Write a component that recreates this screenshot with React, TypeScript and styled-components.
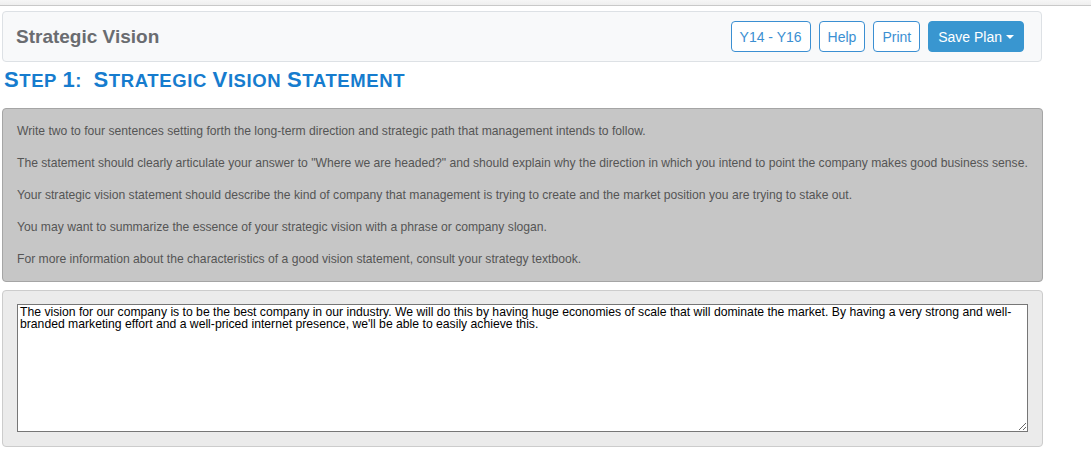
import styled, { createGlobalStyle } from 'styled-components';

const GlobalStyle = createGlobalStyle`
	body {
		margin: 0;
		background: #ffffff;
		font-family: 'Liberation Sans', Arial, sans-serif;
	}
`;

const ranges = ['Y14 - Y16', 'Help', 'Print'];

const guidance = [
	'Write two to four sentences setting forth the long-term direction and strategic path that management intends to follow.',
	'The statement should clearly articulate your answer to "Where we are headed?" and should explain why the direction in which you intend to point the company makes good business sense.',
	'Your strategic vision statement should describe the kind of company that management is trying to create and the market position you are trying to stake out.',
	'You may want to summarize the essence of your strategic vision with a phrase or company slogan.',
	'For more information about the characteristics of a good vision statement, consult your strategy textbook.',
];

const statement =
	"The vision for our company is to be the best company in our industry. We will do this by having huge economies of scale that will dominate the market. By having a very strong and well-branded marketing effort and a well-priced internet presence, we'll be able to easily achieve this.";

// small caps drawn by hand: first letter of each word full size, rest smaller
const SmallCaps = ({ text }: { text: string }) => (
	<>
		{text.split(' ').map((word, i) => (
			<span key={i}>
				{i > 0 && ' '}
				<Initial>{word.charAt(0)}</Initial>
				{word.slice(1)}
			</span>
		))}
	</>
);

const App = () => {
	return (
		<>
			<GlobalStyle />
			<TopStrip />
			<Page>
				<Header>
					<Title>Strategic Vision</Title>
					<Actions>
						{ranges.map((label) => (
							<OutlineButton key={label}>{label}</OutlineButton>
						))}
						<SaveButton>
							Save Plan
							<Caret />
						</SaveButton>
					</Actions>
				</Header>

				<StepHeading>
					<SmallCaps text='Step 1:' />
					&nbsp; <SmallCaps text='Strategic Vision Statement' />
				</StepHeading>

				<Guidance>
					{guidance.map((line) => (
						<p key={line}>{line}</p>
					))}
				</Guidance>

				<EditorPanel>
					<Statement defaultValue={statement} />
				</EditorPanel>
			</Page>
		</>
	);
};

const TopStrip = styled.div`
	height: 5px;
	background: linear-gradient(#f6f6f6, #efefef);
	border-bottom: 1px solid #c9c9c9;
`;

const Page = styled.div`
	width: 1041px;
	padding: 5px 0 0 2px;
`;

const Header = styled.div`
	display: flex;
	align-items: center;
	justify-content: space-between;
	width: 1040px;
	box-sizing: border-box;
	height: 51px;
	padding: 0 17px 0 13px;
	background: #f8f9fa;
	border: 1px solid #dde1e5;
	border-radius: 4px;
`;

const Title = styled.h2`
	margin: 0;
	font-size: 19px;
	font-weight: bold;
	color: #6a6c70;
`;

const Actions = styled.div`
	display: flex;
	gap: 8px;
`;

const OutlineButton = styled.button`
	height: 31px;
	padding: 0 8px;
	font-family: 'Liberation Sans', Arial, sans-serif;
	font-size: 14px;
	color: #3b8fd2;
	background: #ffffff;
	border: 1px solid #3b8fd2;
	border-radius: 4px;
`;

const SaveButton = styled.button`
	display: flex;
	align-items: center;
	gap: 4px;
	height: 31px;
	padding: 0 9px;
	font-family: 'Liberation Sans', Arial, sans-serif;
	font-size: 14px;
	color: #ffffff;
	background: #3996d0;
	border: 1px solid #3996d0;
	border-radius: 4px;
`;

const Caret = styled.span`
	width: 0;
	height: 0;
	border-left: 4px solid transparent;
	border-right: 4px solid transparent;
	border-top: 4px solid #ffffff;
	margin-top: 1px;
`;

const StepHeading = styled.h1`
	height: 28px;
	margin: 5px 0 13px 2px;
	font-size: 18.5px;
	line-height: 28px;
	letter-spacing: 0.6px;
	font-weight: bold;
	text-transform: uppercase;
	color: #167cce;
	white-space: nowrap;
`;

const Initial = styled.span`
	font-size: 22px;
	line-height: 1;
`;

const Guidance = styled.div`
	box-sizing: border-box;
	padding: 14px;
	background: #c6c6c6;
	border: 1px solid #a5a5a5;
	border-radius: 4px;

	p {
		margin: 0 0 16px;
		font-size: 12.15px;
		line-height: 16px;
		color: #555555;
	}

	p:last-child {
		margin-bottom: 0;
	}
`;

const EditorPanel = styled.div`
	margin-top: 8px;
	padding: 13px 14px 14px;
	background: #ebebeb;
	border: 1px solid #cccccc;
	border-radius: 4px;
`;

const Statement = styled.textarea`
	display: block;
	box-sizing: border-box;
	width: 100%;
	height: 128px;
	margin: 0;
	padding: 1px 2px;
	font-family: 'Liberation Sans', Arial, sans-serif;
	font-size: 12.2px;
	line-height: 12px;
	color: #000000;
	background: #ffffff;
	border: 1px solid #767676;
	border-radius: 0;
	resize: vertical;
`;

export default App;
